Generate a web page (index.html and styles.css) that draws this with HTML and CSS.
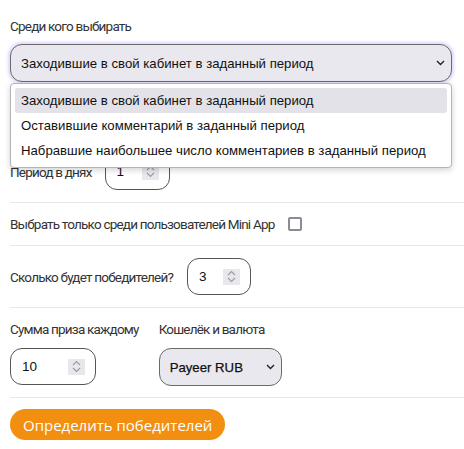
FILE: index.html
```html
<!DOCTYPE html>
<html lang="ru">
<head>
  <meta charset="UTF-8" />
  <meta name="viewport" content="width=device-width, initial-scale=1.0" />
  <title>Розыгрыш</title>
  <link rel="stylesheet" href="styles.css">
</head>
<body>

  <form class="raffle">

    <div class="section first">
      <div class="label">Среди кого выбирать</div>
      <div class="select-wrap wide focused">
        <div class="select">Заходившие в свой кабинет в заданный период</div>
        <svg class="chevron" width="9" height="6" viewBox="0 0 9 6"><path d="M1 1l3.5 3.5L8 1" fill="none" stroke="#222" stroke-width="1.4"/></svg>

        <!-- open list of the select -->
        <div class="options">
          <div class="option active">Заходившие в свой кабинет в заданный период</div>
          <div class="option">Оставившие комментарий в заданный период</div>
          <div class="option">Набравшие наибольшее число комментариев в заданный период</div>
        </div>
      </div>

      <div class="row period">
        <span class="label">Период в днях</span>
        <div class="number w65">
          <span class="value">1</span>
          <span class="spin"><svg width="9" height="13" viewBox="0 0 9 13"><path d="M1 5l3.5-3.5L8 5M1 8l3.5 3.5L8 8" fill="none" stroke="#9a9aa2" stroke-width="1.1"/></svg></span>
        </div>
      </div>
    </div>

    <div class="section">
      <label class="row check-row">
        <span class="label">Выбрать только среди пользователей Mini App</span>
        <span class="checkbox"></span>
      </label>
    </div>

    <div class="section">
      <div class="row winners">
        <span class="label">Сколько будет победителей?</span>
        <div class="number w64">
          <span class="value">3</span>
          <span class="spin"><svg width="9" height="13" viewBox="0 0 9 13"><path d="M1 5l3.5-3.5L8 5M1 8l3.5 3.5L8 8" fill="none" stroke="#9a9aa2" stroke-width="1.1"/></svg></span>
        </div>
      </div>
    </div>

    <div class="section last">
      <div class="prize">
        <div class="col">
          <span class="label">Сумма приза каждому</span>
          <div class="number w86">
            <span class="value">10</span>
            <span class="spin"><svg width="9" height="13" viewBox="0 0 9 13"><path d="M1 5l3.5-3.5L8 5M1 8l3.5 3.5L8 8" fill="none" stroke="#9a9aa2" stroke-width="1.1"/></svg></span>
          </div>
        </div>
        <div class="col">
          <span class="label">Кошелёк и валюта</span>
          <div class="select-wrap small">
            <div class="select medium">Payeer RUB</div>
            <svg class="chevron" width="9" height="6" viewBox="0 0 9 6"><path d="M1 1l3.5 3.5L8 1" fill="none" stroke="#222" stroke-width="1.4"/></svg>
          </div>
        </div>
      </div>
    </div>

    <button type="submit" class="submit">Определить победителей</button>
  </form>

</body>
</html>
```

FILE: styles.css
```css
* {
  box-sizing: border-box;
}

body {
  margin: 0;
  background: #fff;
  color: #333;
  font-family: "Liberation Sans", Arial, sans-serif;
}

.raffle {
  padding-left: 10px;
}

.label {
  font-family: Roboto, sans-serif;
  font-size: 13.5px;
  line-height: 20px;
  letter-spacing: -0.8px;
  color: #333;
  white-space: nowrap;
}

.section {
  border-bottom: 1px solid #e8e8e8;
  padding: 12px 0;
}

.section.first {
  padding-top: 16px;
}

.section.last {
  padding: 11px 0;
}

.row {
  display: flex;
  align-items: center;
}

/* select boxes */
.select-wrap {
  position: relative;
}

.select-wrap.wide {
  width: 442px;
  margin-top: 8px;
}

.select-wrap.small {
  width: 123px;
}

.select {
  height: 38px;
  display: flex;
  align-items: center;
  padding: 0 10px;
  background: #e9e8ee;
  border: 1px solid #6a6a6a;
  border-radius: 12px;
  font-size: 13.2px;
  color: #111;
  white-space: nowrap;
}

.select.medium {
  -webkit-text-stroke: 0.25px #111;
}

.focused .select {
  box-shadow: 0 0 3px 2px rgba(170, 140, 245, 0.35);
}

.chevron {
  position: absolute;
  right: 7px;
  top: 16px;
}

.options {
  position: absolute;
  top: 39px;
  left: 0;
  right: 0;
  background: #fff;
  border: 1px solid #b4b4b8;
  border-radius: 4px;
  padding: 4px;
  box-shadow: 0 2px 6px rgba(0, 0, 0, 0.18);
  z-index: 1;
  font-size: 13.2px;
  color: #111;
}

.option {
  height: 25px;
  line-height: 25px;
  padding: 0 6px;
  border-radius: 3px;
  white-space: nowrap;
}

.option.active {
  background: #e3e2e8;
}

/* number inputs */
.number {
  height: 37px;
  display: flex;
  align-items: center;
  justify-content: space-between;
  padding: 0 10px 0 11px;
  border: 1px solid #555;
  border-radius: 12px;
  font-size: 13.5px;
  color: #111;
}

.w65 { width: 65px; }
.w64 { width: 64px; }
.w86 { width: 86px; }

.spin {
  width: 17px;
  height: 16px;
  background: #e8e8ec;
  display: flex;
  align-items: center;
  justify-content: center;
}

.period {
  margin-top: 71px;
  gap: 13px;
}

.winners {
  gap: 14px;
}

.check-row {
  height: 18px;
  gap: 14px;
}

.checkbox {
  width: 14px;
  height: 14px;
  border: 2px solid #8b8b93;
  border-radius: 2px;
}

.prize {
  display: flex;
  gap: 20px;
}

.prize .col {
  display: flex;
  flex-direction: column;
  gap: 9px;
}

.submit {
  margin-top: 11px;
  height: 31px;
  padding: 0 13px;
  background: #f28f10;
  color: #fff;
  border: none;
  border-radius: 16px;
  font-family: "Open Sans", sans-serif;
  font-size: 15px;
  cursor: pointer;
}
```
